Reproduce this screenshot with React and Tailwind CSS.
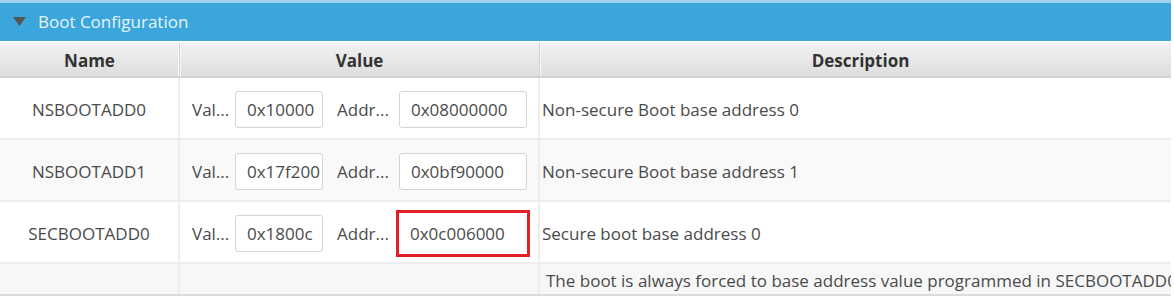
import React from "react";

const font = { fontFamily: '"Open Sans", "Noto Sans", sans-serif' };

function Field({ value }) {
  return (
    <div className="h-[37px] flex items-center rounded-[3px] border border-[#d4d4d4] bg-white pl-[11px] text-[17px] text-[#4a4a4a] overflow-hidden whitespace-nowrap">
      {value}
    </div>
  );
}

function Row({ name, v1, v2, desc, bg, highlight }) {
  return (
    <div className={`grid grid-cols-[180px_360px_631px] h-[62px] border-b-2 border-[#ededed] ${bg}`}>
      <div className="flex items-center justify-center border-r-2 border-[#ededed] text-[17px] text-[#4a4a4a] pt-[3px]">
        {name}
      </div>
      <div className="flex items-center border-r-2 border-[#ededed] pl-[12px] text-[17px] text-[#4a4a4a] pt-[3px]">
        <span className="w-[43px] whitespace-nowrap overflow-hidden">Val...</span>
        <div className="w-[88px]"><Field value={v1} /></div>
        <span className="ml-[14px] w-[62px] whitespace-nowrap overflow-hidden">Addr...</span>
        <div className={highlight ? "w-[134px] border-[3px] border-[#e21e26] -ml-[3px] h-[47px] flex items-center" : "w-[128px]"}>
          {highlight ? (
            <div className="w-[128px] h-[41px] flex items-center bg-white pl-[11px] text-[17px] text-[#4a4a4a]">{v2}</div>
          ) : (
            <Field value={v2} />
          )}
        </div>
      </div>
      <div className="flex items-center pl-[2px] text-[17px] text-[#4a4a4a] whitespace-nowrap overflow-hidden pt-[3px]">
        {desc}
      </div>
    </div>
  );
}

export default function App() {
  return (
    <div className="w-[1174px] h-[300px] bg-white overflow-hidden" style={font}>
      <div className="w-[1171px]">
        <div className="h-[41px] bg-[#3ba6dc] border-t-[3px] border-[#9fd3ef] flex items-center">
          <svg width="13" height="10" viewBox="0 0 13 10" className="ml-[13px] mr-[12px]">
            <polygon points="0,0 13,0 6.5,9" fill="#545454" />
          </svg>
          <span className="text-[17px] text-[#e8f4fb]">Boot Configuration</span>
        </div>
        <div className="h-[2px] bg-white" />
        <div className="grid grid-cols-[180px_360px_631px] h-[35px] bg-gradient-to-b from-[#f1f1f1] to-[#dedede] border-b-2 border-[#d2d2d2] text-[17px] font-bold text-[#333]">
          <div className="flex items-center justify-center border-r border-[#d0d0d0] shadow-[inset_-1px_0_0_#fafafa] pt-[3px]">Name</div>
          <div className="flex items-center justify-center border-r border-[#d0d0d0] shadow-[inset_1px_0_0_#fafafa] pt-[3px]">Value</div>
          <div className="flex items-center justify-center shadow-[inset_1px_0_0_#fafafa] pt-[3px] pl-[10px]">Description</div>
        </div>
        <Row name="NSBOOTADD0" v1="0x10000" v2="0x08000000" desc="Non-secure Boot base address 0" bg="bg-white" />
        <Row name="NSBOOTADD1" v1="0x17f200" v2="0x0bf90000" desc="Non-secure Boot base address 1" bg="bg-[#f9f9f9]" />
        <Row name="SECBOOTADD0" v1="0x1800c" v2="0x0c006000" desc="Secure boot base address 0" bg="bg-white" highlight />
        <div className="grid grid-cols-[180px_360px_631px] h-[32px] bg-[#f7f7f7] border-b-2 border-[#dcdcdc]">
          <div className="border-r-2 border-[#ededed]" />
          <div className="border-r-2 border-[#ededed]" />
          <div className="flex items-center pl-[6px] text-[17px] text-[#4a4a4a] whitespace-nowrap overflow-hidden pt-[3px]">
            The boot is always forced to base address value programmed in SECBOOTADD0
          </div>
        </div>
      </div>
    </div>
  );
}
